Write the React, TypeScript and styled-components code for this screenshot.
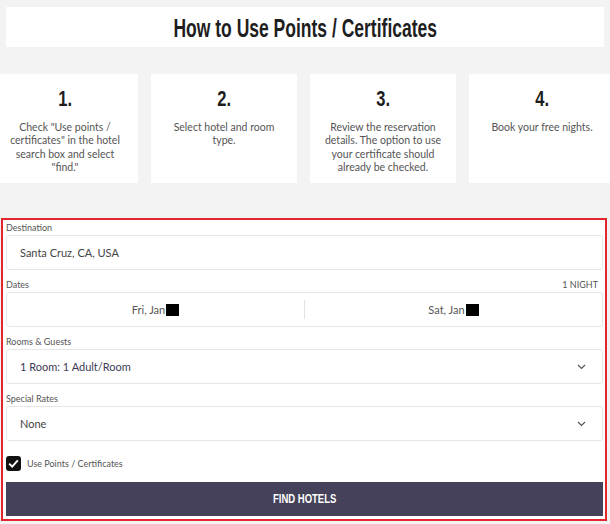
import React from "react";
import styled, { createGlobalStyle } from "styled-components";

const GlobalStyle = createGlobalStyle`
  html, body {
    margin: 0;
    padding: 0;
    background: #f3f3f3;
    overflow: hidden;
  }
  body {
    font-family: Lato, "Open Sans", "Liberation Sans", sans-serif;
    color: #555;
  }
`;

// no condensed face is installed, so squeeze Arial-metric bold horizontally
const Condensed = styled.span<{ $scale?: number }>`
  display: inline-block;
  font-family: "Liberation Sans", Arial, sans-serif;
  font-weight: 700;
  transform: scaleX(${(p) => p.$scale ?? 0.75});
  white-space: nowrap;
`;

const Page = styled.div`
  width: 610px;
  height: 524px;
  padding-top: 7px;
  box-sizing: border-box;
`;

const TitleBox = styled.div`
  margin: 0 6px;
  height: 40px;
  background: #fff;
  display: flex;
  align-items: center;
  justify-content: center;
`;

const Title = styled.h1`
  margin: 0;
  font-size: 25px;
  line-height: 28px;
  font-weight: 700;
  color: #1e1e1e;
`;

const Steps = styled.div`
  display: grid;
  grid-template-columns: repeat(4, 146px);
  gap: 13px;
  margin: 27px 0 0 -8px;
`;

const StepCard = styled.div`
  background: #fff;
  height: 109px;
  box-sizing: border-box;
  padding: 12px 14px 0;
  display: flex;
  flex-direction: column;
  align-items: center;
  text-align: center;
`;

const StepNumber = styled.div`
  font-size: 22px;
  line-height: 24px;
  color: #1c1c1c;
`;

const StepText = styled.p`
  margin: 10px 0 0;
  font-size: 10.5px;
  line-height: 13.4px;
  color: #555;
`;

const Form = styled.form`
  margin: 35px 0 0 1px;
  width: 606px;
  height: 303px;
  box-sizing: border-box;
  border: 2px solid #e3262d;
  background: #fff;
  padding: 0 2px 0 3px;
`;

const Field = styled.div`
  margin-bottom: 7px;
`;

const LabelRow = styled.div`
  display: flex;
  justify-content: space-between;
  align-items: center;
  height: 14px;
  margin-bottom: 1px;
  padding-right: 5px;
`;

const Label = styled.span`
  font-size: 9px;
  color: #555;
`;

const Box = styled.div<{ $tone?: string; $split?: boolean }>`
  height: 35px;
  box-sizing: border-box;
  border: 1px solid #e6e6e6;
  border-radius: 3px;
  display: flex;
  align-items: center;
  padding: ${(p) => (p.$split ? "0" : "0 16px 0 13px")};
  font-size: 11px;
  color: ${(p) => p.$tone || "#444"};
`;

const DateHalf = styled.div`
  flex: 1;
  display: flex;
  align-items: center;
  justify-content: center;
  gap: 1px;
  color: #555;
`;

const Divider = styled.div`
  width: 1px;
  height: 19px;
  background: #e3e3e3;
`;

const Redacted = styled.span`
  display: inline-block;
  width: 13px;
  height: 12px;
  background: #000;
`;

const Value = styled.span`
  flex: 1;
`;

const CheckRow = styled.label`
  display: flex;
  align-items: center;
  gap: 6px;
  margin: 14px 0 11px;
  height: 16px;
  font-size: 9px;
  color: #555;
`;

const CheckBox = styled.span`
  width: 15px;
  height: 15px;
  border-radius: 3px;
  background: #111;
  display: flex;
  align-items: center;
  justify-content: center;
`;

const FindButton = styled.button`
  width: 100%;
  height: 34px;
  border: 0;
  padding: 0;
  background: #45415a;
  color: #fff;
  font-size: 12.5px;
  display: flex;
  align-items: center;
  justify-content: center;
`;

const Chevron = () => (
  <svg width="9" height="6" viewBox="0 0 9 6">
    <path d="M1 1l3.5 3.5L8 1" fill="none" stroke="#555" strokeWidth="1.2" />
  </svg>
);

const steps = [
  { n: "1.", text: 'Check "Use points / certificates" in the hotel search box and select "find."' },
  { n: "2.", text: "Select hotel and room type." },
  { n: "3.", text: "Review the reservation details. The option to use your certificate should already be checked." },
  { n: "4.", text: "Book your free nights." },
];

export default function App() {
  return (
    <Page>
      <GlobalStyle />
      <TitleBox>
        <Title>
          <Condensed $scale={0.7}>How to Use Points / Certificates</Condensed>
        </Title>
      </TitleBox>
      <Steps>
        {steps.map((s) => (
          <StepCard key={s.n}>
            <StepNumber>
              <Condensed>{s.n}</Condensed>
            </StepNumber>
            <StepText>{s.text}</StepText>
          </StepCard>
        ))}
      </Steps>
      <Form onSubmit={(e) => e.preventDefault()}>
        <Field>
          <LabelRow>
            <Label>Destination</Label>
          </LabelRow>
          <Box>Santa Cruz, CA, USA</Box>
        </Field>
        <Field>
          <LabelRow>
            <Label>Dates</Label>
            <Label>1 NIGHT</Label>
          </LabelRow>
          <Box $split>
            <DateHalf>
              Fri, Jan <Redacted />
            </DateHalf>
            <Divider />
            <DateHalf>
              Sat, Jan <Redacted />
            </DateHalf>
          </Box>
        </Field>
        <Field>
          <LabelRow>
            <Label>Rooms &amp; Guests</Label>
          </LabelRow>
          <Box $tone="#3d3b55">
            <Value>1 Room: 1 Adult/Room</Value>
            <Chevron />
          </Box>
        </Field>
        <Field>
          <LabelRow>
            <Label>Special Rates</Label>
          </LabelRow>
          <Box>
            <Value>None</Value>
            <Chevron />
          </Box>
        </Field>
        <CheckRow>
          <CheckBox>
            <svg width="11" height="9" viewBox="0 0 11 9">
              <path d="M1.2 4.6l3 3L9.8 1.4" fill="none" stroke="#fff" strokeWidth="2" />
            </svg>
          </CheckBox>
          Use Points / Certificates
        </CheckRow>
        <FindButton type="submit">
          <Condensed $scale={0.76}>FIND HOTELS</Condensed>
        </FindButton>
      </Form>
    </Page>
  );
}
